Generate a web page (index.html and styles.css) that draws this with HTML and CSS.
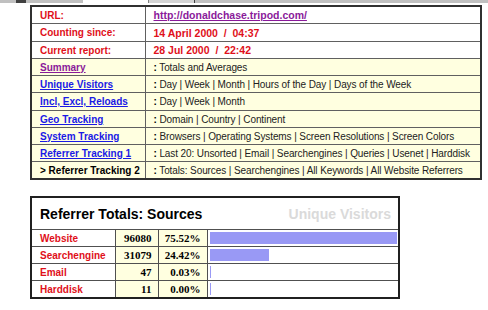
FILE: index.html
```html
<!DOCTYPE html>
<html>
<head>
<meta charset="utf-8">
<link rel="stylesheet" href="styles.css">
</head>
<body>
<div class="chrome">
  <span class="c1"></span><span class="c2"></span><span class="c3"></span><span class="c4"></span><span class="c5"></span>
</div>
<table class="info">
  <colgroup><col class="k"><col></colgroup>
  <tr class="w"><td class="lbl red">URL:</td><td class="val"><a class="visited" href="#">http://donaldchase.tripod.com/</a></td></tr>
  <tr class="w tall"><td class="lbl red">Counting since:</td><td class="val red">14 April 2000 &nbsp;/&nbsp; 04:37</td></tr>
  <tr class="w"><td class="lbl red">Current report:</td><td class="val red">28 Jul 2000 &nbsp;/&nbsp; 22:42</td></tr>
  <tr><td class="lbl"><a class="visited" href="#">Summary</a></td><td class="desc"><b>:</b> Totals and Averages</td></tr>
  <tr><td class="lbl"><a href="#">Unique Visitors</a></td><td class="desc"><b>:</b> Day | Week | Month | Hours of the Day | Days of the Week</td></tr>
  <tr class="tall"><td class="lbl"><a href="#">Incl, Excl, Reloads</a></td><td class="desc"><b>:</b> Day | Week | Month</td></tr>
  <tr><td class="lbl"><a href="#">Geo Tracking</a></td><td class="desc"><b>:</b> Domain | Country | Continent</td></tr>
  <tr><td class="lbl"><a href="#">System Tracking</a></td><td class="desc"><b>:</b> Browsers | Operating Systems | Screen Resolutions | Screen Colors</td></tr>
  <tr><td class="lbl"><a href="#">Referrer Tracking 1</a></td><td class="desc"><b>:</b> Last 20: Unsorted | Email | Searchengines | Queries | Usenet | Harddisk</td></tr>
  <tr><td class="lbl cur">&gt; Referrer Tracking 2</td><td class="desc"><b>:</b> Totals: Sources | Searchengines | All Keywords | All Website Referrers</td></tr>
</table>

<table class="totals">
  <colgroup><col class="c-src"><col class="c-n"><col class="c-p"><col></colgroup>
  <tr class="head"><td colspan="3" class="title">Referrer Totals: Sources</td><td class="sub">Unique Visitors</td></tr>
  <tr><td class="src">Website</td><td class="num">96080</td><td class="num">75.52%</td><td class="barcell"><div class="bar" style="width:187px"></div></td></tr>
  <tr><td class="src">Searchengine</td><td class="num">31079</td><td class="num">24.42%</td><td class="barcell"><div class="bar" style="width:59px"></div></td></tr>
  <tr><td class="src">Email</td><td class="num">47</td><td class="num">0.03%</td><td class="barcell"><div class="bar" style="width:1px"></div></td></tr>
  <tr><td class="src">Harddisk</td><td class="num">11</td><td class="num">0.00%</td><td class="barcell"><div class="bar" style="width:1px"></div></td></tr>
</table>
</body>
</html>
```
FILE: styles.css
```css
html, body { margin: 0; padding: 0; background: #fff; }
body { font-family: "Liberation Sans", Arial, sans-serif; font-size: 10px; }

.chrome { height: 3px; background: #c0c0c0; display: flex; }
.chrome span { display: block; height: 3px; }
.chrome .c1 { width: 16px; }
.chrome .c2 { width: 10px; background: #404040; }
.chrome .c3 { width: 57px; }
.chrome .c4 { width: 65px; background: #fff; border-right: 1px solid #808080; }
.chrome .c5 { width: 45px; background: #d4d4d4; border-right: 1px solid #404040; }

table { border-collapse: collapse; table-layout: fixed; }

.info { margin: 2px 0 0 30px; width: 452px; border: 2px solid #303030; }
.info col.k { width: 114px; }
.info td { border: 1px solid #606060; height: 16px; padding: 0 0 0 8px; white-space: nowrap; overflow: hidden; }
.info tr.tall td { height: 17px; }
.info td.lbl { font-weight: bold; font-size: 10px; }
.info td.val { font-size: 10.5px; }
.info tr { background: #ffffe0; }
.info tr.w { background: #fff; }
.red { color: #e0101a; font-weight: bold; }
.info a { color: #1a1ae6; font-weight: bold; text-decoration: underline; }
.info a.visited { color: #8a1a9a; }
.info td.cur { color: #000; }
.info td.desc { color: #222; font-size: 10px; letter-spacing: -0.1px; }
.info td.desc b { font-weight: bold; color: #000; }

.totals { margin: 16px 0 0 30px; width: 370px; border: 2px solid #202020; }
.totals col.c-src { width: 84px; }
.totals col.c-n { width: 43px; }
.totals col.c-p { width: 49px; }
.totals td { border: 1px solid #505050; height: 16px; padding: 0; white-space: nowrap; overflow: hidden; }
.totals tr.head td { height: 31px; border-left: 0; border-right: 0; }
.totals .title { font-size: 14px; font-weight: bold; color: #000; padding-left: 8px; overflow: visible; }
.totals .sub { font-size: 14px; font-weight: bold; color: #dadada; text-align: right; padding-right: 7px; }
.totals .src { padding-left: 8px; color: #e0101a; font-weight: bold; font-size: 10px; }
.totals .num { background: #ffffe0; text-align: right; font-family: "Liberation Serif", "Times New Roman", serif; font-weight: bold; font-size: 11px; padding-right: 6px; }
.totals .barcell { padding-left: 2px; }
.bar { height: 12px; background: #9999f5; }
```
